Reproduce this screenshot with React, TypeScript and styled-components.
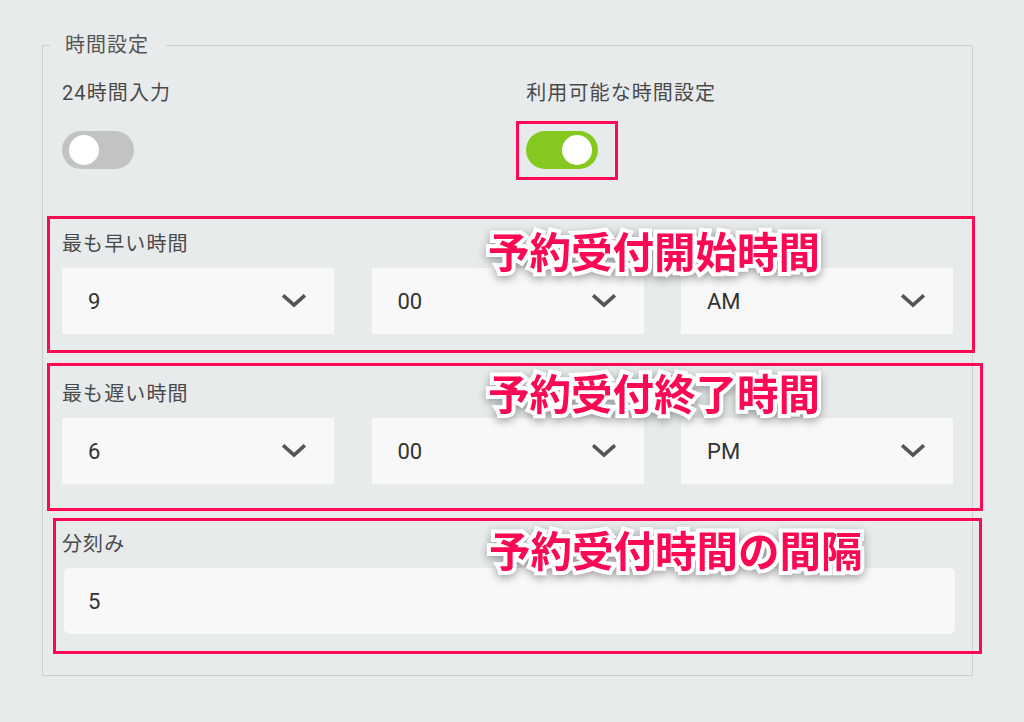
import React from "react";
import styled, { createGlobalStyle } from "styled-components";

const GlobalStyle = createGlobalStyle`
  html, body {
    margin: 0;
    padding: 0;
    background: #e8ebec;
  }
  body {
    font-family: Roboto, "Noto Sans CJK JP", "Noto Sans", sans-serif;
    color: #444;
  }
  * { box-sizing: border-box; }
`;

const Page = styled.div`
  position: relative;
  width: 1024px;
  height: 722px;
  padding: 33px 0 0 42px;
  overflow: hidden;
`;

const Fieldset = styled.fieldset`
  width: 931px;
  margin: 0;
  border: 1px solid #cdd0d1;
  padding: 24px 19px 41px 19px;
  min-inline-size: 0;
`;

const Legend = styled.legend`
  margin-left: -12px;
  padding: 0 17px 0 15px;
  font-size: 20px;
  line-height: 24px;
  letter-spacing: 1px;
  color: #555;
`;

const Label = styled.div`
  font-size: 20px;
  line-height: 24px;
  color: #4a4a4a;
  letter-spacing: 1.1px;
`;

const ToggleRow = styled.div`
  display: grid;
  grid-template-columns: 1fr 1fr;
  column-gap: 37.5px;
  margin-bottom: 63px;
`;

const ToggleField = styled.div`
  display: flex;
  flex-direction: column;
  align-items: flex-start;
  gap: 26px;
`;

const Track = styled.div<{ $on: boolean }>`
  width: 72px;
  height: 38px;
  border-radius: 19px;
  padding: 0 6px 0 7px;
  display: flex;
  align-items: center;
  justify-content: ${(p) => (p.$on ? "flex-end" : "flex-start")};
  background: ${(p) => (p.$on ? "#85c920" : "#c2c3c4")};
`;

const Knob = styled.div`
  width: 30px;
  height: 30px;
  border-radius: 50%;
  background: #fff;
`;

const Group = styled.div`
  display: flex;
  flex-direction: column;
  gap: 12px;
  & + & {
    margin-top: 48px;
  }
`;

const SelectRow = styled.div`
  display: grid;
  grid-template-columns: repeat(3, 1fr);
  column-gap: 37.5px;
`;

const SelectBox = styled.div`
  height: 66px;
  background: #f8f8f8;
  padding: 0 28px 0 26px;
  display: flex;
  align-items: center;
  justify-content: space-between;
  font-size: 22px;
  color: #333;
`;

const TextInput = styled.div`
  height: 66px;
  margin: 0 -2px 0 2px;
  background: #f8f8f8;
  border-radius: 6px;
  padding: 0 24px;
  display: flex;
  align-items: center;
  font-size: 22px;
  color: #333;
`;

const Chevron = () => (
  <svg width="24" height="14" viewBox="0 0 24 14" fill="none">
    <path d="M2.5 2.5 L12 11 L21.5 2.5" stroke="#555" strokeWidth="3.6" strokeLinecap="square" strokeLinejoin="miter" />
  </svg>
);

const Select = ({ value }: { value: string }) => (
  <SelectBox>
    <span>{value}</span>
    <Chevron />
  </SelectBox>
);

const Frame = styled.div<{ $l: number; $t: number; $w: number; $h: number }>`
  position: absolute;
  left: ${(p) => p.$l}px;
  top: ${(p) => p.$t}px;
  width: ${(p) => p.$w}px;
  height: ${(p) => p.$h}px;
  border: 3px solid #fd0852;
  pointer-events: none;
`;

const Note = styled.div<{ $l: number; $t: number }>`
  position: absolute;
  left: ${(p) => p.$l}px;
  top: ${(p) => p.$t}px;
  font-family: "Noto Sans CJK JP", sans-serif;
  font-weight: 700;
  font-size: 41.5px;
  line-height: 41px;
  white-space: nowrap;
  color: #fd0852;
  -webkit-text-stroke: 8px #fff;
  paint-order: stroke fill;
  filter: drop-shadow(0 3px 4px rgba(0, 0, 0, 0.35));
`;

export default function App() {
  return (
    <>
      <GlobalStyle />
      <Page>
        <Fieldset>
          <Legend>時間設定</Legend>
          <ToggleRow>
            <ToggleField>
              <Label>24時間入力</Label>
              <Track $on={false}>
                <Knob />
              </Track>
            </ToggleField>
            <ToggleField>
              <Label>利用可能な時間設定</Label>
              <Track $on={true}>
                <Knob />
              </Track>
            </ToggleField>
          </ToggleRow>
          <Group>
            <Label>最も早い時間</Label>
            <SelectRow>
              <Select value="9" />
              <Select value="00" />
              <Select value="AM" />
            </SelectRow>
          </Group>
          <Group>
            <Label>最も遅い時間</Label>
            <SelectRow>
              <Select value="6" />
              <Select value="00" />
              <Select value="PM" />
            </SelectRow>
          </Group>
          <Group>
            <Label>分刻み</Label>
            <TextInput>5</TextInput>
          </Group>
        </Fieldset>

        <Frame $l={516} $t={121} $w={102} $h={59} />
        <Frame $l={47} $t={216} $w={928} $h={137} />
        <Frame $l={47} $t={363} $w={936} $h={148} />
        <Frame $l={53} $t={518} $w={929} $h={136} />

        <Note $l={488} $t={230}>予約受付開始時間</Note>
        <Note $l={488} $t={372}>予約受付終了時間</Note>
        <Note $l={489} $t={529}>予約受付時間の間隔</Note>
      </Page>
    </>
  );
}
